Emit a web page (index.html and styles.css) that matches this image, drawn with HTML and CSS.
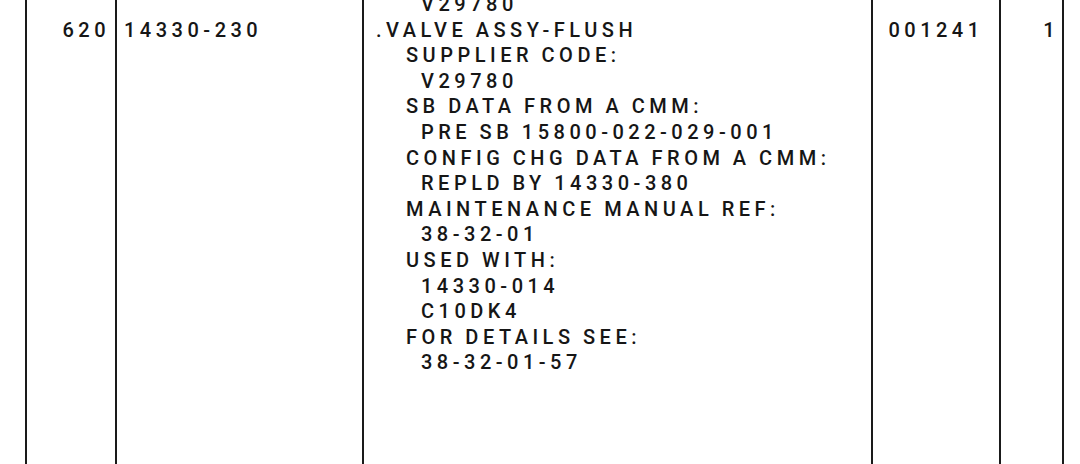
FILE: index.html
```html
<!DOCTYPE html>
<html>
<head>
  <title>Illustrated Parts List - Item 620</title>
  <link rel="stylesheet" href="styles.css">
</head>
<body>
  <div class="sheet">
    <!-- tail of the previous item, scrolled mostly out of view -->
    <div class="cell item"></div>
    <div class="cell pn"></div>
    <div class="cell desc">
      <div class="l3">V29780</div>
    </div>
    <div class="cell code"></div>
    <div class="cell qty"></div>

    <!-- item 620 -->
    <div class="cell item last">620</div>
    <div class="cell pn last">14330-230</div>
    <div class="cell desc last">
      <div class="l1">.VALVE ASSY-FLUSH</div>
      <div class="l2">SUPPLIER CODE:</div>
      <div class="l3">V29780</div>
      <div class="l2">SB DATA FROM A CMM:</div>
      <div class="l3">PRE SB 15800-022-029-001</div>
      <div class="l2">CONFIG CHG DATA FROM A CMM:</div>
      <div class="l3">REPLD BY 14330-380</div>
      <div class="l2">MAINTENANCE MANUAL REF:</div>
      <div class="l3">38-32-01</div>
      <div class="l2">USED WITH:</div>
      <div class="l3">14330-014</div>
      <div class="l3">C10DK4</div>
      <div class="l2">FOR DETAILS SEE:</div>
      <div class="l3">38-32-01-57</div>
    </div>
    <div class="cell code last">001241</div>
    <div class="cell qty last">1</div>
  </div>
</body>
</html>
```

FILE: styles.css
```css
html, body {
  margin: 0;
  padding: 0;
  background: #fff;
  overflow: hidden;
}
body {
  font-family: Roboto, "Liberation Sans", sans-serif;
  font-size: 20px;
  font-weight: 500;
  line-height: 25.6px;
  letter-spacing: 4.5px;
  word-spacing: -1px;
  color: #161616;
}
.sheet {
  display: grid;
  grid-template-columns: 90px 247px 509px 128px 65px;
  margin-left: 25px;
  margin-top: -8px;
  width: 1039px;
}
.cell {
  box-sizing: border-box;
  border-left: 2px solid #1a1a1a;
  white-space: nowrap;
}
.cell.qty {
  border-right: 2px solid #1a1a1a;
}
.cell.last {
  height: 446px;
}
.item {
  text-align: right;
  padding-right: 5px;
}
.pn {
  padding-left: 7px;
}
.desc {
  padding-left: 12px;
}
.code {
  text-align: center;
}
.qty {
  text-align: right;
  padding-right: 3px;
}
.l2 {
  padding-left: 30px;
}
.l3 {
  padding-left: 45px;
}
```
